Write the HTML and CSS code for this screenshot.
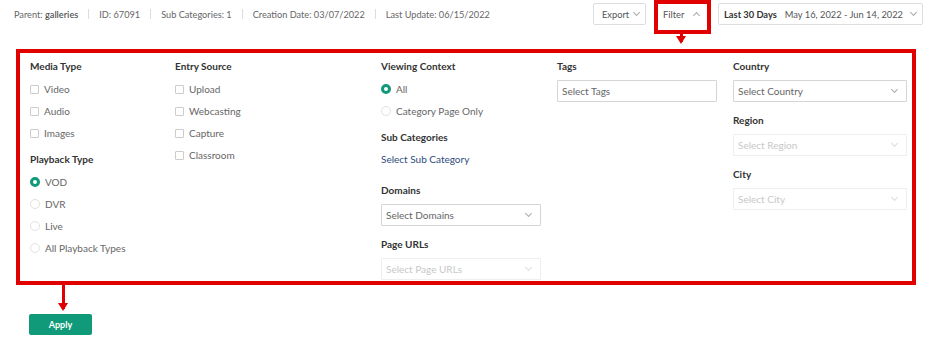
FILE: index.html
```html
<!DOCTYPE html>
<html lang="en">
<head>
  <meta charset="UTF-8" />
  <title>Category Filters</title>
  <link rel="stylesheet" href="styles.css">
</head>
<body>
  <div class="toolbar">
    <div class="meta">
      <span>Parent: <b>galleries</b></span>
      <i class="sep"></i>
      <span>ID: 67091</span>
      <i class="sep"></i>
      <span>Sub Categories: 1</span>
      <i class="sep"></i>
      <span>Creation Date: 03/07/2022</span>
      <i class="sep"></i>
      <span>Last Update: 06/15/2022</span>
    </div>
    <div class="actions">
      <button class="tool-btn export-btn">Export <span class="chev down"></span></button>
      <button class="tool-btn filter-btn">Filter <span class="chev up"></span></button>
      <button class="tool-btn date-btn"><b>Last 30 Days</b><span>May 16, 2022 - Jun 14, 2022</span><span class="chev down"></span></button>
    </div>
  </div>

  <!-- annotation marks -->
  <div class="mark-box"></div>
  <div class="mark-arrow arrow-filter"></div>
  <div class="mark-arrow arrow-apply"></div>

  <div class="filters">
    <div class="col">
      <h4>Media Type</h4>
      <label class="check"><span class="box"></span>Video</label>
      <label class="check"><span class="box"></span>Audio</label>
      <label class="check"><span class="box"></span>Images</label>
      <h4 class="sub">Playback Type</h4>
      <label class="check radio"><span class="dot on"></span>VOD</label>
      <label class="check radio"><span class="dot"></span>DVR</label>
      <label class="check radio"><span class="dot"></span>Live</label>
      <label class="check radio"><span class="dot"></span>All Playback Types</label>
    </div>

    <div class="col">
      <h4>Entry Source</h4>
      <label class="check"><span class="box"></span>Upload</label>
      <label class="check"><span class="box"></span>Webcasting</label>
      <label class="check"><span class="box"></span>Capture</label>
      <label class="check"><span class="box"></span>Classroom</label>
    </div>

    <div class="col">
      <h4>Viewing Context</h4>
      <label class="check radio"><span class="dot on"></span>All</label>
      <label class="check radio"><span class="dot"></span>Category Page Only</label>
      <h4 class="sub">Sub Categories</h4>
      <a class="link" href="#">Select Sub Category</a>
      <h4 class="sub domains">Domains</h4>
      <div class="select">Select Domains <span class="chev down"></span></div>
      <h4 class="sub after-select">Page URLs</h4>
      <div class="select disabled">Select Page URLs <span class="chev down"></span></div>
    </div>

    <div class="col">
      <h4>Tags</h4>
      <div class="select tags">Select Tags</div>
    </div>

    <div class="col">
      <h4>Country</h4>
      <div class="select">Select Country <span class="chev down"></span></div>
      <h4 class="sub after-select">Region</h4>
      <div class="select disabled">Select Region <span class="chev down"></span></div>
      <h4 class="sub after-select">City</h4>
      <div class="select disabled">Select City <span class="chev down"></span></div>
    </div>
  </div>

  <button class="apply">Apply</button>
</body>
</html>
```

FILE: styles.css
```css
* {
  box-sizing: border-box;
}

body {
  margin: 0;
  background: #ffffff;
  color: #555;
  font-family: Lato, 'Open Sans', sans-serif;
  font-size: 10px;
  position: relative;
  height: 342px;
  overflow: hidden;
}

.toolbar {
  display: flex;
  align-items: center;
  justify-content: space-between;
  height: 28px;
  padding: 3px 13px 3px 14px;
}

.meta {
  display: flex;
  align-items: center;
  gap: 10px;
  font-size: 9.2px;
  color: #666;
}

.meta b {
  font-weight: 600;
  color: #555;
}

.sep {
  width: 1px;
  height: 10px;
  background: #ddd;
}

.actions {
  display: flex;
  gap: 12px;
}

.tool-btn {
  display: flex;
  align-items: center;
  gap: 9px;
  height: 22px;
  padding: 0 7px 0 9px;
  background: #fff;
  border: 1px solid #dedede;
  border-radius: 2px;
  font-family: inherit;
  font-size: 9.3px;
  color: #555;
  white-space: nowrap;
}

.tool-btn .chev {
  flex-shrink: 0;
  margin-left: auto;
}

.export-btn {
  width: 53px;
  gap: 4px;
  padding: 0 6px 0 8px;
}

.filter-btn {
  width: 48px;
  border-color: #fff;
  padding: 0 6px 0 4px;
}

.date-btn {
  width: 205px;
  padding: 0 7px 0 5px;
  gap: 8px;
}

.date-btn b {
  color: #333;
  font-weight: 700;
}

.chev {
  display: inline-block;
  width: 5px;
  height: 5px;
  border-right: 1px solid #aaa;
  border-bottom: 1px solid #aaa;
}

.chev.down {
  transform: translateY(-2px) rotate(45deg);
}

.chev.up {
  transform: translateY(1px) rotate(-135deg);
}

/* red annotation marks drawn over the screenshot */
.mark-box {
  position: absolute;
  left: 654px;
  top: 0;
  width: 57px;
  height: 34px;
  border: 4px solid #e00000;
  z-index: 2;
}

.mark-arrow {
  position: absolute;
  width: 3px;
  background: #e00000;
  z-index: 2;
}

.mark-arrow::after {
  content: '';
  position: absolute;
  left: -4px;
  bottom: -2px;
  border-left: 5.5px solid transparent;
  border-right: 5.5px solid transparent;
  border-top: 8px solid #e00000;
}

.arrow-filter {
  left: 680px;
  top: 33px;
  height: 9px;
}

.arrow-apply {
  left: 62px;
  top: 284px;
  height: 25px;
}

.filters {
  display: grid;
  grid-template-columns: 129px 190px 160px 160px 174px;
  column-gap: 16px;
  align-items: start;
  margin: 21px 20px 0 16px;
  height: 236px;
  padding: 6px 0 0 10px;
  border: 4px solid #e00000;
}

.col {
  display: flex;
  flex-direction: column;
}

h4 {
  margin: 0 0 5px;
  height: 14px;
  line-height: 14px;
  font-size: 10px;
  font-weight: 700;
  color: #333;
}

h4.sub {
  margin-top: 8px;
}

h4.domains {
  margin-top: 12px;
}

h4.after-select {
  margin-top: 11px;
}

.check {
  display: flex;
  align-items: center;
  gap: 5px;
  height: 22px;
  color: #666;
}

.box {
  width: 9px;
  height: 9px;
  border: 1px solid #ccc;
  border-radius: 1px;
}

.dot {
  width: 10px;
  height: 10px;
  border: 1px solid #e2e2e2;
  border-radius: 50%;
}

.dot.on {
  border: 3px solid #119a7a;
  background: #fff;
}

.link {
  display: block;
  height: 22px;
  line-height: 20px;
  color: #2e4c7e;
  text-decoration: none;
}

.select {
  display: flex;
  align-items: center;
  justify-content: space-between;
  margin-top: 2px;
  height: 22px;
  padding: 0 9px 0 4px;
  border: 1px solid #d5d5d5;
  border-radius: 1px;
  color: #666;
}

.select.disabled {
  border-color: #eee;
  color: #c8c8c8;
}

.select.disabled .chev {
  border-color: #ddd;
}

.apply {
  display: block;
  margin: 29px 0 0 29px;
  width: 63px;
  height: 21px;
  background: #119a7a;
  border: none;
  border-radius: 2px;
  color: #fff;
  font-family: inherit;
  font-size: 9px;
  font-weight: 700;
}
```
